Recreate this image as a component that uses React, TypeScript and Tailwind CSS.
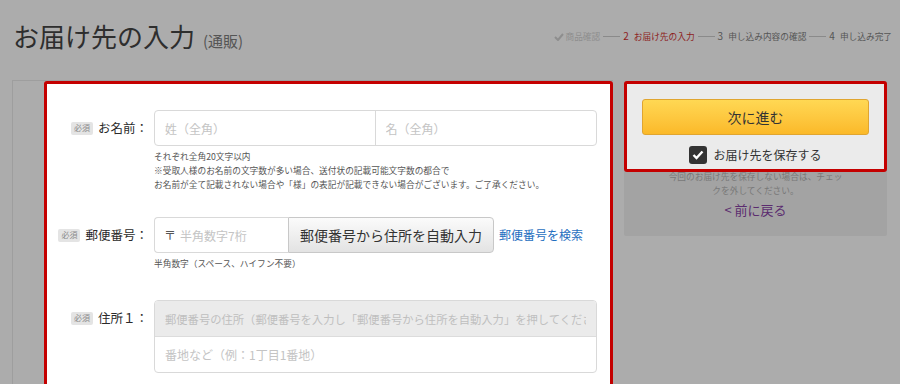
import React from "react";

const Badge: React.FC = () => (
  <span className="inline-flex h-[13px] w-[22px] items-center justify-center rounded-[2px] bg-[#e4e4e4] text-[8px] leading-none text-[#8a8a8a]">
    必須
  </span>
);

const FieldLabel: React.FC<{ children: React.ReactNode }> = ({ children }) => (
  <div className="flex h-[36px] w-[101px] shrink-0 items-center justify-end gap-[5px]">
    <Badge />
    <span className="text-[12.5px] text-[#2a2a2a]">{children}</span>
  </div>
);

const StepLine: React.FC = () => <span className="h-px w-[17px] bg-[#8a8a8a]" />;

const Steps: React.FC = () => (
  <div className="mt-[29px] flex items-center gap-[3px] text-[8.7px] leading-[14px]">
    <span className="flex items-center gap-[1px] text-[#8e8e8e]">
      <svg width="10" height="8" viewBox="0 0 10 8">
        <path d="M1 4 L4 7 L9 1" fill="none" stroke="#8e8e8e" strokeWidth="2" />
      </svg>
      商品確認
    </span>
    <StepLine />
    <span className="text-[#8c1c1c]">
      <span className="mr-[5px] text-[10px]">2</span>お届け先の入力
    </span>
    <StepLine />
    <span className="text-[#555]">
      <span className="mr-[5px] text-[10px]">3</span>申し込み内容の確認
    </span>
    <StepLine />
    <span className="text-[#555]">
      <span className="mr-[5px] text-[10px]">4</span>申し込み完了
    </span>
  </div>
);

const inputCls =
  "min-w-0 bg-transparent px-[10px] text-[12px] text-[#333] outline-none placeholder:text-[#c4c4c4]";

const App: React.FC = () => {
  return (
    <div className="h-[384px] w-[900px] overflow-hidden bg-[#acacac] font-['Noto_Sans_CJK_JP',sans-serif]">
      <header className="flex h-[80px] items-start justify-between pl-[13px] pr-[8px]">
        <h1 className="mt-[18px] flex items-baseline text-[26px] leading-[36px] text-[#2e2e2e]">
          お届け先の入力
          <span className="ml-[8px] text-[15px] text-[#555]">(通販)</span>
        </h1>
        <Steps />
      </header>

      <div className="flex items-start">
        {/* left card, dimmed behind the highlighted form */}
        <div className="ml-[12px] h-[304px] w-[601px] border-l border-t border-[#9e9e9e] pl-[31px]">
          <div className="h-[320px] w-[569px] rounded-[3px] border-[3px] border-[#c40000] bg-white pt-[26px]">
            {/* name */}
            <div className="flex">
              <FieldLabel>お名前：</FieldLabel>
              <div className="ml-[6px] w-[443px]">
                <div className="flex h-[36px] rounded-[4px] border border-[#d9d9d9]">
                  <input className={inputCls + " h-full w-1/2 border-r border-[#d9d9d9]"} placeholder="姓（全角）" />
                  <input className={inputCls + " h-full w-1/2"} placeholder="名（全角）" />
                </div>
                <div className="mt-[4px] text-[8.7px] leading-[14px] text-[#555]">
                  <p>それぞれ全角20文字以内</p>
                  <p>※受取人様のお名前の文字数が多い場合、送付状の記載可能文字数の都合で</p>
                  <p>お名前が全て記載されない場合や「様」の表記が記載できない場合がございます。ご了承ください。</p>
                </div>
              </div>
            </div>

            {/* postal code */}
            <div className="mt-[25px] flex">
              <FieldLabel>郵便番号：</FieldLabel>
              <div className="ml-[6px]">
                <div className="flex h-[36px] items-center">
                  <div className="flex h-full w-[134px] items-center rounded-l-[4px] border border-r-0 border-[#d9d9d9] pl-[9px]">
                    <span className="text-[12px] text-[#555]">〒</span>
                    <input className={inputCls + " h-full w-full pl-[4px]"} placeholder="半角数字7桁" />
                  </div>
                  <button className="h-full w-[206px] rounded-r-[4px] border border-[#c8c8c8] bg-linear-to-b from-[#fbfbfb] to-[#e3e3e3] text-[14px] text-[#333]">
                    郵便番号から住所を自動入力
                  </button>
                  <a className="ml-[5px] text-[12px] text-[#1f6fbf]">郵便番号を検索</a>
                </div>
                <p className="mt-[4px] text-[8.7px] leading-[14px] text-[#555]">半角数字（スペース、ハイフン不要）</p>
              </div>
            </div>

            {/* address */}
            <div className="mt-[29px] flex">
              <FieldLabel>住所１：</FieldLabel>
              <div className="ml-[6px] flex w-[443px] flex-col overflow-hidden rounded-[4px] border border-[#d9d9d9]">
                <input
                  className="h-[36px] min-w-0 border-b border-[#dcdcdc] bg-[#ebebeb] px-[10px] text-[11.3px] outline-none placeholder:text-[#bfbfbf]"
                  placeholder="郵便番号の住所（郵便番号を入力し「郵便番号から住所を自動入力」を押してください）"
                  readOnly
                />
                <input className={inputCls + " h-[35px]"} placeholder="番地など（例：1丁目1番地）" />
              </div>
            </div>
          </div>
        </div>

        {/* right panel */}
        <div className="ml-[11px] mt-[1px] h-[155px] w-[263px] rounded-[2px] bg-[#a3a3a3]">
          <div className="relative z-10 rounded-[3px] border-[3px] border-[#c40000] bg-[#ebebeb] px-[15px] pb-[4px] pt-[15px]">
            <button className="h-[36px] w-full rounded-[3px] border border-[#e0a530] bg-linear-to-b from-[#ffd853] to-[#fbb928] text-[14px] text-[#333]">
              次に進む
            </button>
            <label className="mt-[10px] flex h-[20px] items-center justify-center gap-[6px]">
              <span className="flex h-[18px] w-[18px] items-center justify-center rounded-[3px] bg-[#333]">
                <svg width="12" height="10" viewBox="0 0 12 10">
                  <path d="M1.5 5 L4.5 8 L10.5 1.5" fill="none" stroke="white" strokeWidth="2.4" />
                </svg>
              </span>
              <span className="text-[12px] text-[#333]">お届け先を保存する</span>
            </label>
          </div>
          <p className="mx-auto -mt-[2px] w-[178px] text-center text-[8.7px] leading-[14px] text-[#787878]">
            今回のお届け先を保存しない場合は、チェックを外してください。
          </p>
          <div className="mt-[2px] text-center text-[13px] leading-[20px] text-[#5b2c6f]">&lt; 前に戻る</div>
        </div>
      </div>
    </div>
  );
};

export default App;
